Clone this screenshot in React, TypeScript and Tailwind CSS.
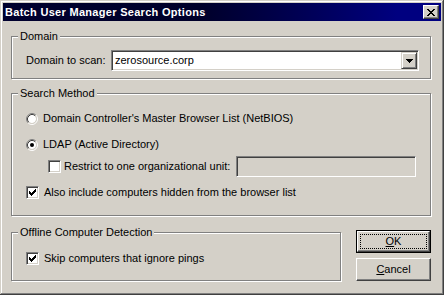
import React from 'react';

const FONT = "font-['Liberation_Sans',Arial,sans-serif]";

// 3D edge presets (Win2000 classic)
const raised =
  'border border-t-white border-l-white border-r-[#404040] border-b-[#404040] shadow-[inset_-1px_-1px_0_#808080]';
const sunken =
  'border border-t-[#808080] border-l-[#808080] border-r-white border-b-white shadow-[inset_1px_1px_0_#404040,inset_-1px_-1px_0_#D4D0C8]';
const etched = 'border border-[#808080] shadow-[inset_1px_1px_0_#fff,1px_1px_0_#fff]';

function Radio({ checked }: { checked?: boolean }) {
  return (
    <svg width="12" height="12" viewBox="0 0 12 12" className="shrink-0">
      <circle cx="6" cy="6" r="4" fill="#fff" />
      <path d="M2.11 9.89 A5.5 5.5 0 0 1 9.89 2.11" fill="none" stroke="#808080" />
      <path d="M9.89 2.11 A5.5 5.5 0 0 1 2.11 9.89" fill="none" stroke="#fff" />
      <path d="M2.82 9.18 A4.5 4.5 0 0 1 9.18 2.82" fill="none" stroke="#404040" />
      <path d="M9.18 2.82 A4.5 4.5 0 0 1 2.82 9.18" fill="none" stroke="#D4D0C8" />
      {checked && <circle cx="6" cy="6" r="2" fill="#000" />}
    </svg>
  );
}

function Checkbox({ checked }: { checked?: boolean }) {
  const cols = [2, 3, 4, 3, 2, 1, 0];
  return (
    <div className={`w-[13px] h-[13px] shrink-0 bg-white ${sunken}`}>
      {checked && (
        <svg width="11" height="11" viewBox="0 0 11 11" shapeRendering="crispEdges">
          {cols.map((s, c) => (
            <rect key={c} x={2 + c} y={2 + s} width="1" height="3" fill="#000" />
          ))}
        </svg>
      )}
    </div>
  );
}

function Group({ title, className, children }: { title: string; className?: string; children: React.ReactNode }) {
  return (
    <fieldset className={`${etched} pl-[14px] ${className ?? ''}`}>
      <legend className="ml-[-8px] px-[2px] leading-[13px] bg-[#D4D0C8]">{title}</legend>
      {children}
    </fieldset>
  );
}

export default function App() {
  return (
    <div
      className={`${FONT} text-[11px] leading-[13px] text-black w-[444px] h-[295px] bg-[#D4D0C8] p-[3px] flex flex-col shadow-[inset_-1px_-1px_0_#404040,inset_1px_1px_0_#D4D0C8,inset_-2px_-2px_0_#808080,inset_2px_2px_0_#fff]`}
    >
      {/* title bar */}
      <div className="h-[18px] shrink-0 flex items-center bg-linear-to-r from-[#00002e] via-[#00002a] via-45% to-[#000080] to-90% pl-[2px] pr-[2px]">
        <span className="text-white font-bold tracking-[0.3px]">Batch User Manager Search Options</span>
        <div className={`ml-auto w-[16px] h-[14px] flex items-center justify-center ${raised} bg-[#D4D0C8]`}>
          <svg width="8" height="7" viewBox="0 0 8 7" shapeRendering="crispEdges">
            {[0, 1, 2, 3, 2, 1, 0].map((x, r) => (
              <g key={r} fill="#000">
                <rect x={x} y={r} width="2" height="1" />
                <rect x={6 - x} y={r} width="2" height="1" />
              </g>
            ))}
          </svg>
        </div>
      </div>

      <div className="flex-1 flex flex-col pt-[9px] pl-[8px] pr-[10px]">
        <Group title="Domain" className="pt-[7px] pb-[7px]">
          <div className="flex items-center">
            <span className="w-[85px]">Domain to scan:</span>
            <div className={`w-[308px] h-[21px] p-[1px] bg-white flex items-center ${sunken}`}>
              <span className="pl-[2px] flex-1">zerosource.corp</span>
              <div className="w-[16px] h-[17px] flex items-center justify-center bg-[#D4D0C8] border border-[#D4D0C8] border-r-[#404040] border-b-[#404040] shadow-[inset_1px_1px_0_#fff,inset_-1px_-1px_0_#808080]">
                <svg width="7" height="4" viewBox="0 0 7 4" shapeRendering="crispEdges">
                  <rect x="0" y="0" width="7" height="1" />
                  <rect x="1" y="1" width="5" height="1" />
                  <rect x="2" y="2" width="3" height="1" />
                  <rect x="3" y="3" width="1" height="1" />
                </svg>
              </div>
            </div>
          </div>
        </Group>

        <Group title="Search Method" className="mt-[8px] pb-[16px]">
          <div className="mt-[12px] h-[13px] flex items-center">
            <Radio />
            <span className="ml-[5px]">Domain Controller's Master Browser List (NetBIOS)</span>
          </div>
          <div className="mt-[13px] h-[13px] flex items-center">
            <Radio checked />
            <span className="ml-[5px]">LDAP (Active Directory)</span>
          </div>
          <div className="mt-[5px] h-[21px] flex items-center pl-[22px]">
            <Checkbox />
            <span className="ml-[3px] w-[172px]">Restrict to one organizational unit:</span>
            <div className={`w-[180px] h-[21px] bg-[#D4D0C8] ${sunken}`} />
          </div>
          <div className="mt-[9px] h-[13px] flex items-center">
            <Checkbox checked />
            <span className="ml-[5px]">Also include computers hidden from the browser list</span>
          </div>
        </Group>

        <div className="mt-[10px] flex items-start">
          <Group title="Offline Computer Detection" className="w-[330px] pb-[15px]">
            <div className="mt-[13px] h-[13px] flex items-center">
              <Checkbox checked />
              <span className="ml-[5px]">Skip computers that ignore pings</span>
            </div>
          </Group>
          <div className="ml-[15px] mt-[4px] flex flex-col">
            <div className="w-[75px] h-[23px] border border-black flex">
              <div className={`flex-1 flex ${raised}`}>
                <div className="flex-1 m-[2px] border border-dotted border-black flex items-center justify-center">
                  <span>
                    <span className="underline">O</span>K
                  </span>
                </div>
              </div>
            </div>
            <div className={`mt-[5px] w-[75px] h-[23px] flex items-center justify-center ${raised}`}>
              <span>
                <span className="underline">C</span>ancel
              </span>
            </div>
          </div>
        </div>
      </div>
    </div>
  );
}
